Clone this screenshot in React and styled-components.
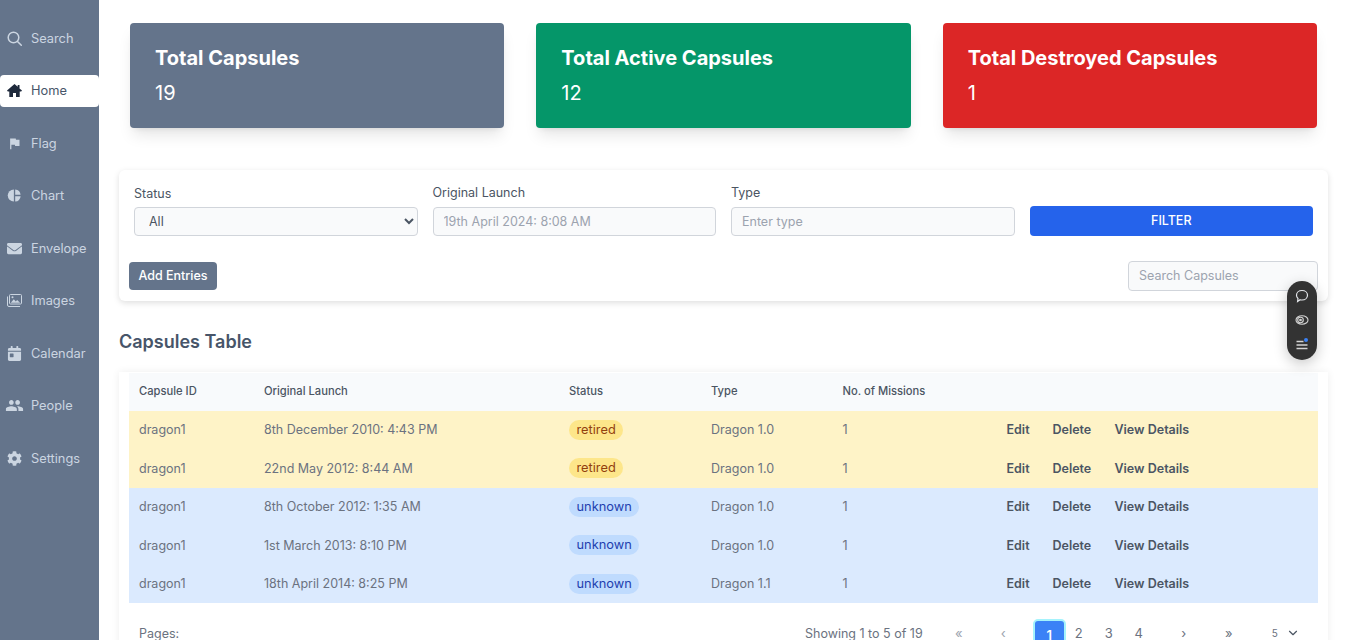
import React from 'react'
import styled, { createGlobalStyle } from 'styled-components'
import { FaEnvelope, FaCog, FaCalendarDay } from 'react-icons/fa'
import { MdFlag, MdPeople } from 'react-icons/md'
import { FiChevronDown } from 'react-icons/fi'

const GlobalStyle = createGlobalStyle`
  html, body { margin: 0; padding: 0; height: 100%; overflow: hidden; background: #fff; }
  body { font-family: Inter, "Liberation Sans", sans-serif; color: #475569; }
  * { box-sizing: border-box; }
`

const Page = styled.div`
  display: flex;
  width: 1350px;
  height: 640px;
  overflow: hidden;
`

const Sidebar = styled.nav`
  width: 99px;
  flex: none;
  background: #64748b;
  padding-top: 22px;
  display: flex;
  flex-direction: column;
  gap: 20.5px;
`

const NavItem = styled.div`
  height: 32px;
  display: flex;
  align-items: center;
  gap: 9px;
  padding-left: 7px;
  font-size: 12.8px;
  border-radius: 4px;
  color: ${({ $active }) => ($active ? '#475569' : '#cbd5e1')};
  background: ${({ $active }) => ($active ? '#fff' : 'transparent')};
  svg { color: ${({ $active }) => ($active ? '#1e293b' : '#cbd5e1')}; width: 15px; height: 15px; flex: none; }
`

const BigPeople = styled(MdPeople)`
  transform: scale(1.25);
`

const Main = styled.main`
  flex: 1;
  min-width: 0;
  padding: 23px 22px 0 20px;
`

const Cards = styled.div`
  display: grid;
  grid-template-columns: repeat(3, 1fr);
  gap: 32px;
  padding: 0 11px;
`

const Card = styled.div`
  height: 105px;
  border-radius: 4px;
  padding: 23px 25px;
  color: #fff;
  background: ${({ $bg }) => $bg};
  box-shadow: 0 10px 15px -3px rgba(0, 0, 0, .1), 0 4px 6px -4px rgba(0, 0, 0, .1);
`

const CardTitle = styled.div`
  font-size: 20px;
  line-height: 24px;
  font-weight: 700;
`

const CardValue = styled.div`
  font-size: 20px;
  line-height: 24px;
  margin-top: 11px;
`

const FilterPanel = styled.section`
  margin-top: 42px;
  height: 131px;
  border-radius: 6px;
  padding: 15px 10px 0;
  background: #fff;
  box-shadow: 0 2px 6px rgba(0, 0, 0, .13);
`

const FilterGrid = styled.div`
  display: grid;
  grid-template-columns: repeat(4, 1fr);
  gap: 15px;
  padding: 0 5px;
  align-items: end;
`

const Field = styled.label`
  display: flex;
  flex-direction: column;
  font-size: 12.5px;
  line-height: 16px;
  gap: ${({ $gap }) => $gap || 6}px;
  color: #4b5563;
`

const inputLook = `
  height: 29px;
  width: 100%;
  border: 1px solid #d1d5db;
  border-radius: 4px;
  background: #f9fafb;
  font-family: inherit;
  font-size: 12.5px;
  padding: 0 10px;
  outline: none;
  &::placeholder { color: #9ca3af; opacity: 1; }
`

const Select = styled.select`
  ${inputLook}
  color: #4b5563;
`

const Input = styled.input`
  ${inputLook}
`

const FilterButton = styled.button`
  height: 30px;
  border: 0;
  border-radius: 4px;
  padding: 0 0 2px;
  background: #2563eb;
  color: #fff;
  font-family: inherit;
  font-size: 12.5px;
  font-weight: 500;
`

const ActionRow = styled.div`
  display: flex;
  justify-content: space-between;
  align-items: center;
  margin-top: 25px;
`

const AddButton = styled.button`
  width: 88px;
  height: 28px;
  border: 0;
  border-radius: 4px;
  padding: 0 0 2px;
  background: #64748b;
  color: #fff;
  font-family: inherit;
  font-size: 12.5px;
  font-weight: 500;
`

const SearchBox = styled.input`
  ${inputLook}
  width: 190px;
  height: 30px;
  padding-bottom: 2px;
`

const TableTitle = styled.h2`
  margin: 29px 0 0;
  font-size: 18px;
  line-height: 24px;
  font-weight: 600;
  color: #475569;
`

const TablePanel = styled.section`
  margin-top: 18px;
  padding: .5px 10px 0;
  height: 300px;
  background: #fff;
  box-shadow: 0 0 8px rgba(0, 0, 0, .07);
`

const Row = styled.div`
  display: grid;
  grid-template-columns: 125px 305px 142px 131.5px 164px 1fr;
  align-items: center;
  height: ${({ $head }) => ($head ? '38px' : '38.5px')};
  padding-left: 10px;
  padding-bottom: ${({ $head }) => ($head ? '2px' : '0')};
  font-size: ${({ $head }) => ($head ? '11.2px' : '12.5px')};
  font-weight: ${({ $head }) => ($head ? 500 : 400)};
  color: ${({ $head }) => ($head ? '#4b5563' : '#6b7280')};
  background: ${({ $bg }) => $bg};
`

const Badge = styled.span`
  justify-self: start;
  height: 20px;
  line-height: 20px;
  padding: 0 7.5px;
  border-radius: 10px;
  font-size: 12.8px;
  color: ${({ $status }) => ($status === 'retired' ? '#92400e' : '#1e40af')};
  background: ${({ $status }) => ($status === 'retired' ? '#fde68a' : '#bfdbfe')};
`

const Actions = styled.div`
  display: grid;
  grid-template-columns: 46px 62px auto;
  font-weight: 600;
  font-size: 12.5px;
  color: #4b5563;
`

const Footer = styled.div`
  display: flex;
  align-items: center;
  height: 60px;
  padding: 0 10px;
  font-size: 12.5px;
  color: #6b7280;
`

const Pages = styled.span`
  width: 666px;
`

const Pager = styled.div`
  display: flex;
  align-items: center;
  margin-left: 21px;
`

const PageLink = styled.span`
  width: ${({ $w }) => $w || 30}px;
  text-align: center;
  font-size: 13px;
  color: ${({ $muted }) => ($muted ? '#9ca3af' : '#6b7280')};
`

const CurrentPage = styled.span`
  width: 33px;
  height: 34px;
  margin: 5px -2px 0 0;
  padding-top: 6px;
  text-align: center;
  border-radius: 5px;
  background: #3b82f6;
  border: 2px solid #a5f3fc;
  color: #fff;
  font-size: 13px;
  font-weight: 600;
`

const PageSize = styled.span`
  display: flex;
  align-items: center;
  gap: 8px;
  margin-left: 28px;
  font-size: 10px;
  svg { width: 14px; height: 14px; color: #4b5563; }
`

const FloatingPill = styled.div`
  position: fixed;
  left: 1287px;
  top: 281px;
  width: 30px;
  height: 79px;
  border-radius: 15px;
  background: #333;
  box-shadow: 0 4px 14px rgba(0, 0, 0, .22);
  display: flex;
  flex-direction: column;
  align-items: center;
  gap: 11px;
  padding-top: 8px;
`

const SearchGlyph = () => (
  <svg viewBox="0 0 15 15" fill="none" stroke="currentColor" strokeWidth="1.5" strokeLinecap="round">
    <circle cx="6.500" cy="6.500" r="5.300" />
    <path d="M10.500 10.500l3.800 3.800" />
  </svg>
)

const HomeGlyph = () => (
  <svg viewBox="0 0 15 15" fill="currentColor">
    <path d="M7.500 1L0 7.600l.8.900h1.500V14h3.700v-4h3v4h3.700V8.500h1.500l.8-.9L12.500 5.400V2h-1.800v1.800z" />
  </svg>
)

const SplitPie = () => (
  <svg viewBox="0 0 16 16" fill="currentColor">
    <path d="M7.300 1.500v13a6.500 6.500 0 0 1 0-13z" />
    <path d="M8.700 1.500a6.500 6.500 0 0 1 5.800 5.800H8.700z" />
    <path d="M8.700 8.700h5.800a6.500 6.500 0 0 1-5.800 5.800z" />
  </svg>
)

const ImagesGlyph = () => (
  <svg viewBox="0 0 15 15" fill="none" stroke="currentColor" strokeWidth="1">
    <rect x="2.500" y="1.500" width="12" height="9.500" rx="1" />
    <path d="M.5 3.500v8.500a1.500 1.500 0 0 0 1.500 1.500h11" />
    <path d="M3.800 9.800l3-3.600 2 2.200 1.300-1.300 3 2.700z" fill="currentColor" stroke="none" />
    <circle cx="5.500" cy="4.300" r="1" fill="currentColor" stroke="none" />
  </svg>
)

const navItems = [
  ['Search', SearchGlyph],
  ['Home', HomeGlyph],
  ['Flag', MdFlag],
  ['Chart', SplitPie],
  ['Envelope', FaEnvelope],
  ['Images', ImagesGlyph],
  ['Calendar', FaCalendarDay],
  ['People', BigPeople],
  ['Settings', FaCog],
]

const capsules = [
  ['8th December 2010: 4:43 PM', 'retired', 'Dragon 1.0'],
  ['22nd May 2012: 8:44 AM', 'retired', 'Dragon 1.0'],
  ['8th October 2012: 1:35 AM', 'unknown', 'Dragon 1.0'],
  ['1st March 2013: 8:10 PM', 'unknown', 'Dragon 1.0'],
  ['18th April 2014: 8:25 PM', 'unknown', 'Dragon 1.1'],
]

const App = () => {
  return (
    <>
      <GlobalStyle />
      <Page>
        <Sidebar>
          {navItems.map(([label, Icon]) => (
            <NavItem key={label} $active={label === 'Home'}>
              <Icon />
              {label}
            </NavItem>
          ))}
        </Sidebar>
        <Main>
          <Cards>
            <Card $bg="#64748b">
              <CardTitle>Total Capsules</CardTitle>
              <CardValue>19</CardValue>
            </Card>
            <Card $bg="#059669">
              <CardTitle>Total Active Capsules</CardTitle>
              <CardValue>12</CardValue>
            </Card>
            <Card $bg="#dc2626">
              <CardTitle>Total Destroyed Capsules</CardTitle>
              <CardValue>1</CardValue>
            </Card>
          </Cards>

          <FilterPanel>
            <FilterGrid>
              <Field $gap={5}>
                Status
                <Select defaultValue="All"><option>All</option></Select>
              </Field>
              <Field>
                Original Launch
                <Input placeholder="19th April 2024: 8:08 AM" />
              </Field>
              <Field>
                Type
                <Input placeholder="Enter type" />
              </Field>
              <FilterButton>FILTER</FilterButton>
            </FilterGrid>
            <ActionRow>
              <AddButton>Add Entries</AddButton>
              <SearchBox placeholder="Search Capsules" />
            </ActionRow>
          </FilterPanel>

          <TableTitle>Capsules Table</TableTitle>

          <TablePanel>
            <Row $head $bg="#f8fafc">
              <span>Capsule ID</span>
              <span>Original Launch</span>
              <span>Status</span>
              <span>Type</span>
              <span>No. of Missions</span>
            </Row>
            {capsules.map(([launch, status, type]) => (
              <Row key={launch} $bg={status === 'retired' ? '#fef3c7' : '#dbeafe'}>
                <span>dragon1</span>
                <span>{launch}</span>
                <Badge $status={status}>{status}</Badge>
                <span>{type}</span>
                <span>1</span>
                <Actions>
                  <span>Edit</span>
                  <span>Delete</span>
                  <span>View Details</span>
                </Actions>
              </Row>
            ))}
            <Footer>
              <Pages>Pages:</Pages>
              <span>Showing 1 to 5 of 19</span>
              <Pager>
                <PageLink $muted>«</PageLink>
                <PageLink $muted $w={59}>‹</PageLink>
                <CurrentPage>1</CurrentPage>
                <PageLink>2</PageLink>
                <PageLink>3</PageLink>
                <PageLink>4</PageLink>
                <PageLink $w={60}>›</PageLink>
                <PageLink>»</PageLink>
                <PageSize>5<FiChevronDown /></PageSize>
              </Pager>
            </Footer>
          </TablePanel>
        </Main>
        <FloatingPill>
          <svg width="14" height="14" viewBox="0 0 14 14" fill="none" stroke="#e5e7eb" strokeWidth="1.2">
            <path d="M7 1.500c3.200 0 5.500 2 5.500 4.700S10.200 11 7 11c-.7 0-1.300-.1-1.900-.3L2.600 12.500l.4-3C2 8.600 1.500 7.400 1.500 6.200 1.500 3.500 3.800 1.500 7 1.500z" />
          </svg>
          <svg width="14" height="12" viewBox="0 0 14 12" fill="none" stroke="#d4d4d4" strokeWidth="1.100">
            <ellipse cx="7" cy="6" rx="6" ry="4.300" />
            <ellipse cx="5.500" cy="6" rx="2.800" ry="2.700" />
            <circle cx="5.500" cy="6" r=".8" fill="#d4d4d4" />
          </svg>
          <svg width="14" height="14" viewBox="0 0 14 14" fill="none">
            <path d="M1.500 4.500h7M1.500 8h11M1.500 11.500h11" stroke="#d4d4d4" strokeWidth="1.400" />
            <circle cx="11" cy="3" r="2" fill="#3b82f6" />
          </svg>
        </FloatingPill>
      </Page>
    </>
  )
}

export default App
